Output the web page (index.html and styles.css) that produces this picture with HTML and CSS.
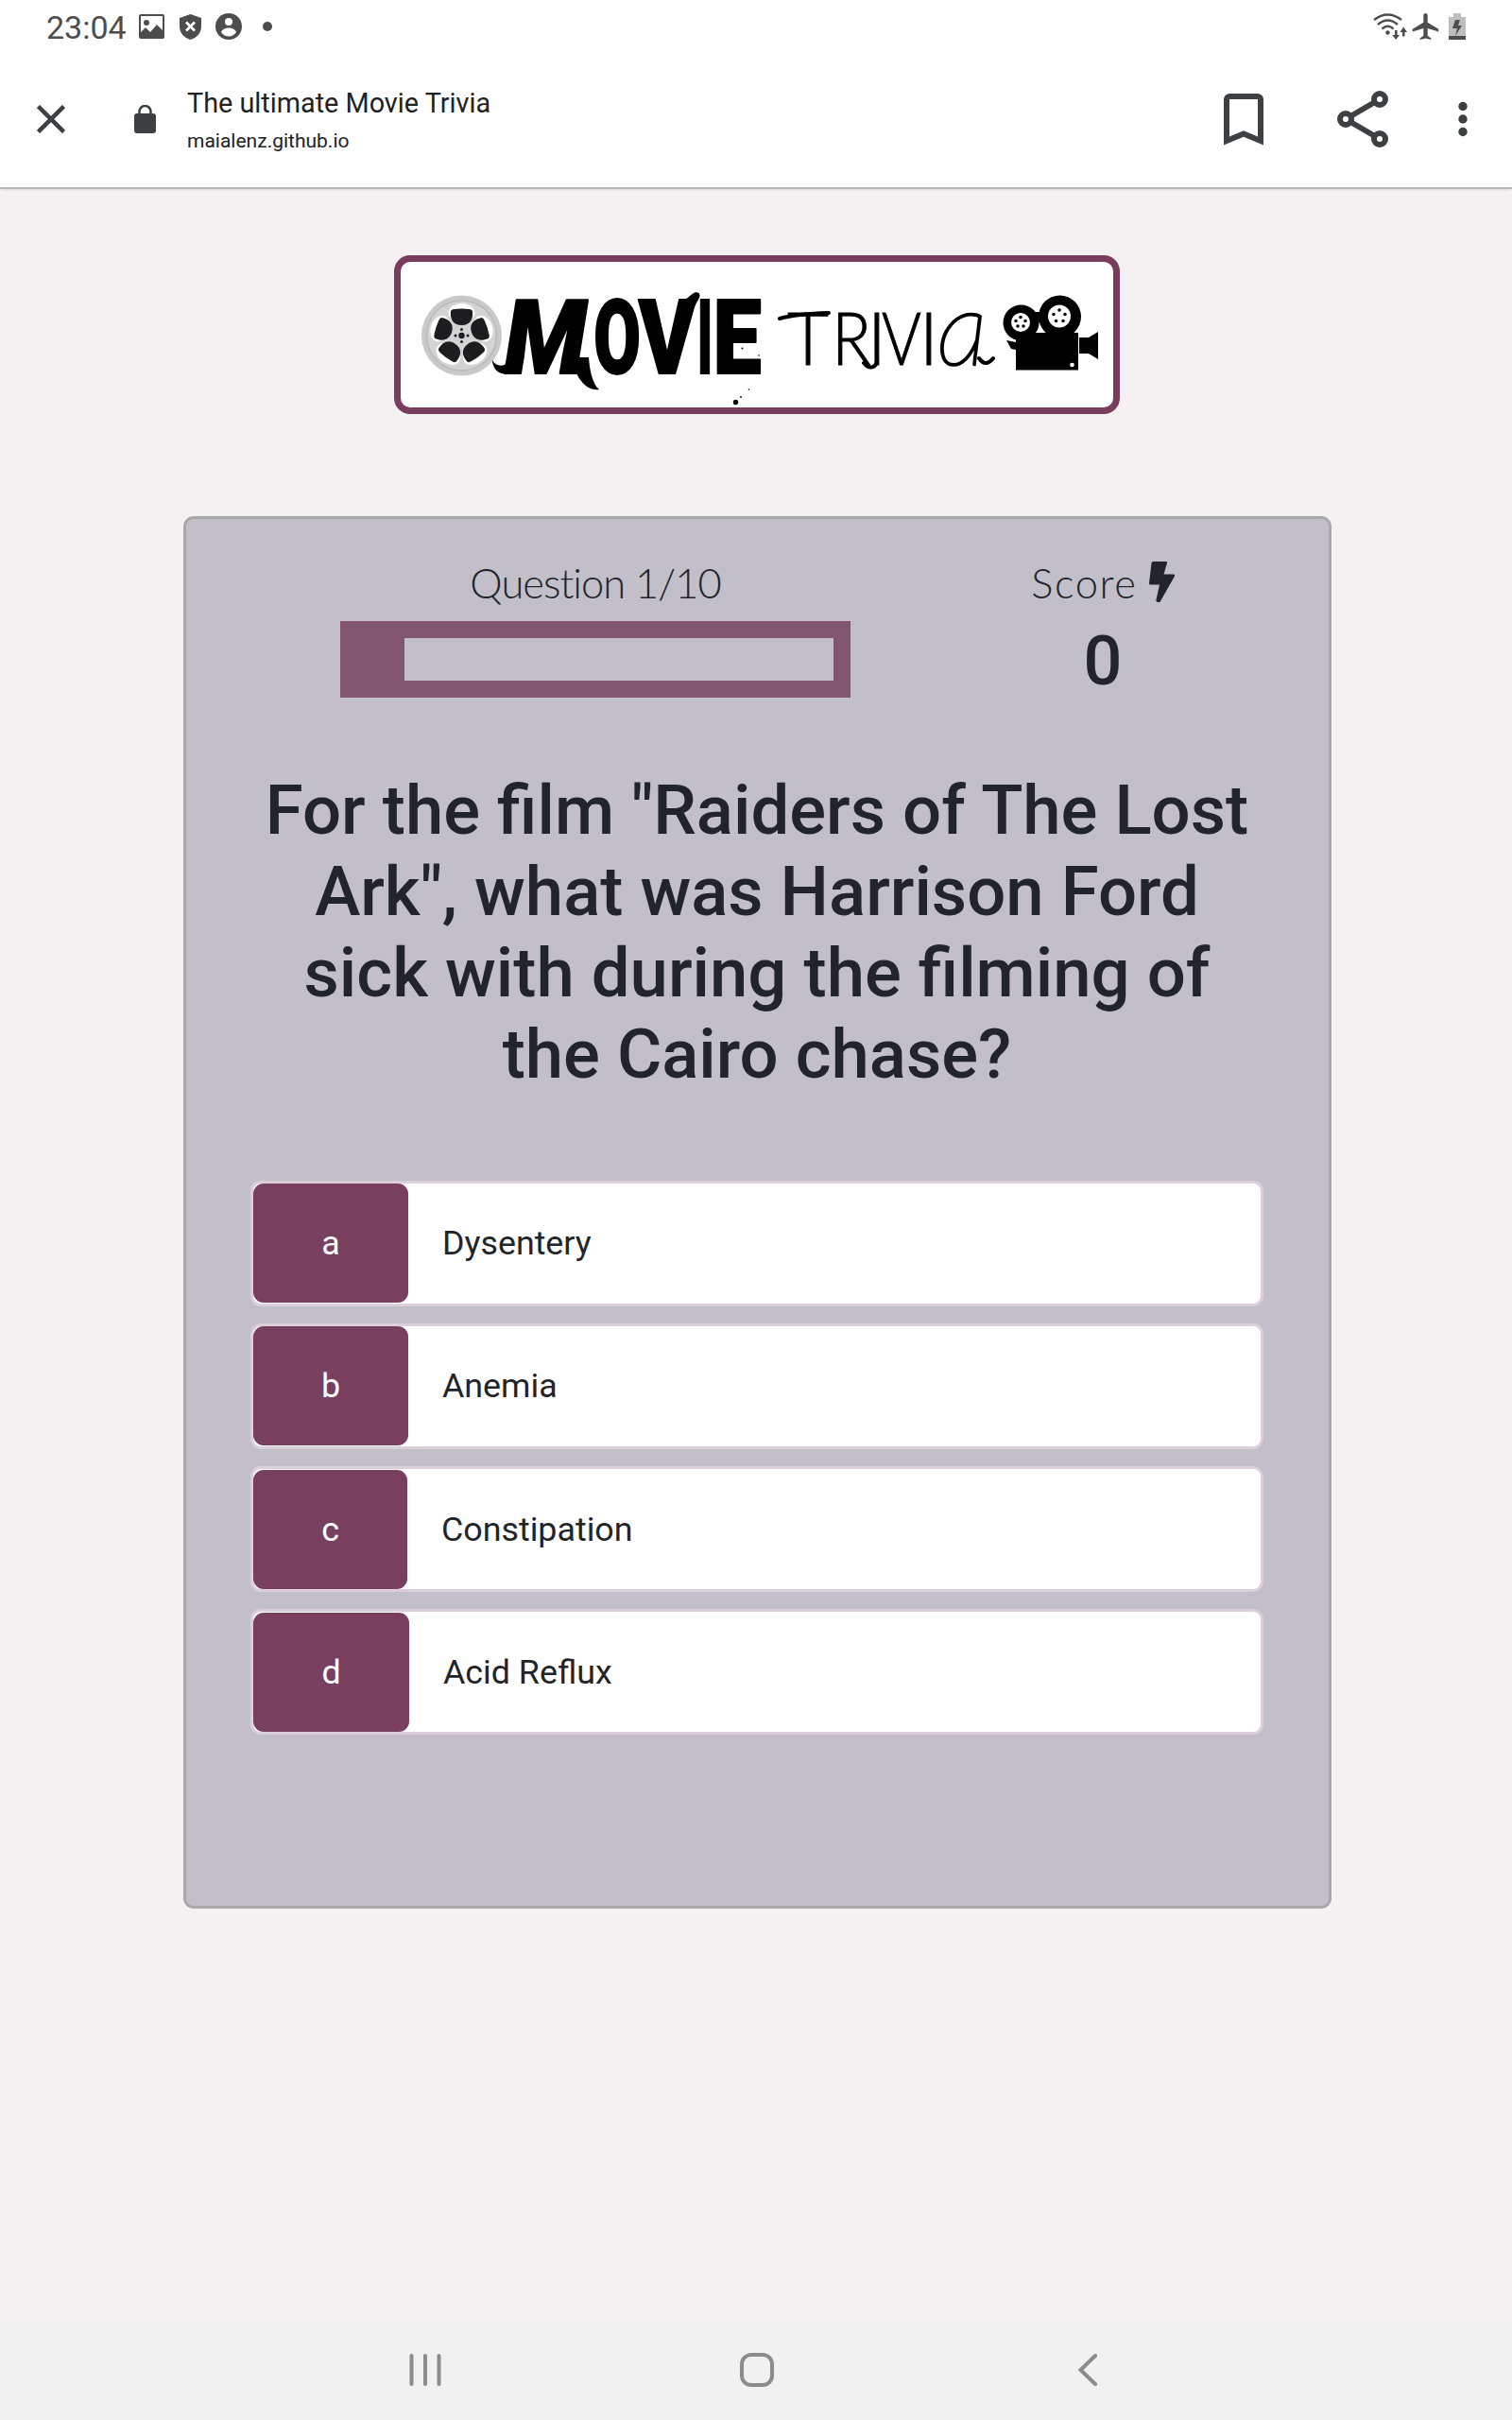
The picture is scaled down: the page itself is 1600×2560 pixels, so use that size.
FILE: index.html
```html
<!DOCTYPE html>
<html lang="en">
<head>
<meta charset="utf-8">
<title>The ultimate Movie Trivia</title>
<link rel="stylesheet" href="styles.css">
</head>
<body>
<div class="status">
  <div class="status-left">
    <span class="clock">23:04</span>
    <svg class="i-image" viewBox="0 0 27 26"><path fill-rule="evenodd" d="M2 0h23a2 2 0 0 1 2 2v22a2 2 0 0 1-2 2H2a2 2 0 0 1-2-2V2a2 2 0 0 1 2-2zM2 2v17l5-5 5 5 7-8 6 6V2zM8 6a3 3 0 1 1 0 6a3 3 0 1 1 0-6z"/></svg>
    <svg class="i-shield" viewBox="0 0 23 27"><path d="M11.500 0L23 4v9c0 7-5 12-11.500 14C5 25 0 20 0 13V4z"/><path class="cut" d="M7 8.500l9 9M16 8.500l-9 9"/></svg>
    <svg class="i-user" viewBox="0 0 28 28"><circle cx="14" cy="14" r="14"/><circle class="hole" cx="14" cy="9" r="4"/><path class="hole" d="M6 20c2-6 14-6 16 0c-4 6-12 6-16 0z"/></svg>
    <svg class="i-dot" viewBox="0 0 10 10"><circle cx="5" cy="5" r="5"/></svg>
  </div>
  <div class="status-right">
    <svg class="i-wifi" viewBox="0 0 36 28"><g class="line"><path d="M1 7Q15.500-4 30 7"/><path d="M5 12Q15.500 3 26 12"/><path d="M9.500 16.500Q15.500 11 21.500 16.500"/></g><circle cx="15.500" cy="20.500" r="2.200"/><path d="M23 18h2.500v5H28l-3.800 5-3.900-5H23zM31 24.500h2.500V20H36l-3.800-5.500L28.500 20H31z"/></svg>
    <svg class="i-plane" viewBox="2 2 20 20" preserveAspectRatio="none"><path d="M21.500 16v-2l-8-5V3.500C13.500 2.700 12.800 2 12 2s-1.500.700-1.500 1.500V9l-8 5v2l8-2.500V19l-2.500 2v1l4-1 4 1v-1l-2.500-2v-5.500z"/></svg>
    <svg class="i-battery" viewBox="0 0 18 28"><path fill="#bebebe" d="M5 0h8v4h5v20H0V4h5z"/><path d="M0 24h18v4H0zM7 7h5l-2 6h4L7 24l2-8H4z"/></svg>
  </div>
</div>
<header class="toolbar">
  <svg class="i-close" viewBox="0 0 30 30"><path d="M1.500 1.500l27 27M28.500 1.500l-27 27"/></svg>
  <svg class="i-lock" viewBox="0 0 23 30"><path d="M3 9h17a3 3 0 0 1 3 3v15a3 3 0 0 1-3 3H3a3 3 0 0 1-3-3V12a3 3 0 0 1 3-3z"/><path class="shackle" d="M5.500 10V7a6 6 0 0 1 12 0v3"/></svg>
  <div class="site"><div class="site-title">The ultimate Movie Trivia</div><div class="site-url">maialenz.github.io</div></div>
  <svg class="i-bookmark" viewBox="0 0 42 55"><path d="M3 50V6a3 3 0 0 1 3-3h30a3 3 0 0 1 3 3v44L21 42.500z"/></svg>
  <svg class="i-share" viewBox="0 0 54 60"><path d="M9 30L45 9M9 30l36 21"/><circle cx="9" cy="30" r="6"/><circle cx="45" cy="9" r="6"/><circle cx="45" cy="51" r="6"/></svg>
  <svg class="i-more" viewBox="0 0 10 38"><circle cx="5" cy="5.500" r="4.700"/><circle cx="5" cy="19" r="4.700"/><circle cx="5" cy="32.500" r="4.700"/></svg>
</header>
<main class="page">
  <div class="logo">
    <svg viewBox="424 277 754 154">
      <g transform="translate(488.500 355)">
        <circle r="42.500" fill="#c9c9c9"/><circle r="37" fill="#d3d3d3" stroke="#b9b9b9" stroke-width="1.500"/>
        <g id="reel-hole"><ellipse cy="-24" rx="14" ry="10" fill="#fff"/><path fill="#1d1d1f" d="M-11.500-26q1-2 4-2q7.500-1 15 0q3 0 4 2c1 9-3 15-11.500 15s-12.500-6-11.500-15z"/></g>
        <use href="#reel-hole" transform="rotate(72)"/><use href="#reel-hole" transform="rotate(144)"/><use href="#reel-hole" transform="rotate(216)"/><use href="#reel-hole" transform="rotate(288)"/>
        <g fill="#1d1d1f"><circle r="3.200"/><circle cx="6.500" r="1.500"/><circle cx="-6.500" r="1.500"/><circle cy="6.500" r="1.500"/><circle cy="-6.500" r="1.500"/></g>
      </g>
      <g class="brush">
        <text class="slant" transform="translate(577 395) scale(.93 1)">M</text>
        <text transform="translate(653 395) scale(.66 1)">O</text>
        <text transform="translate(706 395) scale(.84 1)">V</text>
        <text transform="translate(746 395) scale(.5 1)">I</text>
        <text transform="translate(780 395) scale(.84 1)">E</text>
      </g>
      <path d="M521 381c5 8 11 6 18 3l14 5c-8 8-16 8-22 6c-6-1-10-8-10-14zM603 378h20c1 14 4 28 11 34c-14 2-24-12-31-34zM718 324c6-6 12-12 18-15q6 0 4 6l-6 11z"/>
      <circle cx="778.500" cy="425.500" r="2.700"/><circle cx="784" cy="420" r=".9"/><circle cx="792.500" cy="412" r=".8"/><circle cx="785.500" cy="368.500" r="1"/><circle cx="803" cy="376" r=".8"/>
      <g class="pen">
        <text transform="translate(855 386)">T</text>
        <text transform="translate(901 386) scale(.9 1)">R</text>
        <text transform="translate(928 386)">I</text>
        <text transform="translate(954 386) scale(.84 1)">V</text>
        <text transform="translate(983 386)">I</text>
        <text class="last" transform="translate(1018 386)">a</text>
      </g>
      <path class="ink" d="M825 337q18-5 52-6M914 384q5 6 10 4q3-1 4-6M1036 379q7 10 15 0"/>
      <path d="M1075 352h66v39.500h-66zM1142 357h10l10-6v29l-10-6h-10zM1065 360l10 2v8l-5-1z"/>
      <circle cx="1080.500" cy="341.500" r="19"/><circle cx="1121.500" cy="335" r="22.500"/><path d="M1092 330h16v11h-16z"/>
      <g fill="#fff"><circle cx="1080" cy="341" r="10"/><circle cx="1121" cy="334.500" r="12"/><circle cx="1134.500" cy="386" r="2.300"/><path d="M1096 352l4-5 5 5z"/></g>
      <path class="dots" d="M1080 335.500v0M1085 339.500v0M1083 345v0M1077 345v0M1075 339.500v0M1121 328v0M1127 332.500v0M1125 339.500v0M1117.500 339.500v0M1115 332.500v0"/>
    </svg>
  </div>
  <section class="card">
    <div class="hud">
      <div class="hud-question"><p class="hud-label">Question 1/10</p><div class="progress"><div class="progress-fill" style="width:10%"></div></div></div>
      <div class="hud-score"><p class="hud-label loose">Score<svg class="bolt" viewBox="0 0 27 43"><path d="M4.500 0h13a1.500 1.500 0 0 1 1.400 2L15.500 13.500H26a1.500 1.500 0 0 1 1 2L12 42q-1 1.500-3 1t-1.500-2.500L11 24.500H1.500A1.500 1.500 0 0 1 0 23L2.500 1.500Q3 0 4.500 0z"/></svg></p><div class="score">0</div></div>
    </div>
    <h1 class="question">For the film "Raiders of The Lost Ark", what was Harrison Ford sick with during the filming of the Cairo chase?</h1>
    <div class="choices">
      <div class="choice"><span class="prefix">a</span><span class="answer">Dysentery</span></div>
      <div class="choice"><span class="prefix">b</span><span class="answer">Anemia</span></div>
      <div class="choice low"><span class="prefix narrow">c</span><span class="answer">Constipation</span></div>
      <div class="choice low"><span class="prefix wide">d</span><span class="answer">Acid Reflux</span></div>
    </div>
  </section>
</main>
<nav class="navbar">
  <svg class="i-recent" viewBox="0 0 34 34"><path d="M2.500 2v30M17 2v30M31.500 2v30"/></svg>
  <svg class="i-home" viewBox="0 0 38 38"><rect x="3" y="3" width="32" height="32" rx="10"/></svg>
  <svg class="i-back" viewBox="0 0 22 34"><path d="M19 2L3.500 17 19 32"/></svg>
</nav>
</body>
</html>
```
FILE: styles.css
```css
* { box-sizing: border-box; }
body { margin: 0; width: 1600px; height: 2560px; display: flex; flex-direction: column; background: #f5f1f3; font-family: Roboto, sans-serif; color: #212529; overflow: hidden; }
svg { display: block; flex: none; }
.status { height: 56px; background: #fff; display: flex; justify-content: space-between; align-items: center; padding: 0 49px 0 49px; fill: #4d4d4d; color: #4d4d4d; }
.status-left, .status-right { display: flex; align-items: center; }
.clock { font-size: 34px; line-height: 56px; width: 98px; padding-top: 2px; }
.i-image { width: 27px; height: 26px; margin-right: 16px; }
.i-shield { width: 23px; height: 27px; margin-right: 15px; }
.i-user { width: 28px; height: 28px; margin-right: 22px; }
.i-dot { width: 10px; height: 10px; }
.cut { stroke: #fff; stroke-width: 2.6; }
.hole { fill: #fff; }
.i-wifi { width: 36px; height: 28px; margin-right: 5px; }
.line { fill: none; stroke: #4d4d4d; stroke-width: 2.4; }
.i-plane { width: 29px; height: 28px; margin-right: 10px; }
.i-battery { width: 18px; height: 28px; }
.toolbar { height: 144px; background: #fff; border-bottom: 2px solid #b8b8ba; box-shadow: 0 2px 2px -1px rgba(0,0,0,.1); display: flex; align-items: center; padding: 0 47px 0 39px; margin-bottom: -1px; fill: #3c4043; z-index: 1; }
.toolbar svg { margin-bottom: 2px; }
.i-close { width: 30px; height: 30px; stroke: #3c4043; stroke-width: 4.5; margin-right: 73px; }
.i-lock { width: 23px; height: 30px; margin-right: 33px; }
.shackle { fill: none; stroke: #3c4043; stroke-width: 2.5; }
.site { flex: 1; padding-top: 4px; color: #202124; white-space: nowrap; }
.site-title { font-size: 28.8px; line-height: 40px; }
.site-url { font-size: 21px; line-height: 40px; }
.i-bookmark { width: 42px; height: 55px; fill: none; stroke: #3c4043; stroke-width: 6; margin-right: 78px; }
.i-share { width: 54px; height: 60px; fill: #fff; stroke: #3c4043; stroke-width: 6; margin-right: 74px; }
.i-more { width: 10px; height: 38px; }
.page { flex: 1; display: flex; flex-direction: column; align-items: center; padding-top: 71px; }
.logo { width: 768px; height: 168px; border: 7px solid #783c5c; border-radius: 17px; background: #fff; margin-left: 2px; }
.logo svg { width: 754px; height: 154px; }
.brush { font-family: Roboto, sans-serif; font-weight: 900; font-size: 109px; text-anchor: middle; stroke: #000; stroke-width: 2; stroke-linejoin: round; }
.slant { font-style: italic; }
.pen { font-family: Lato, sans-serif; font-weight: 300; font-size: 76px; text-anchor: middle; stroke: #000; stroke-width: 1; }
.last { font-style: italic; font-size: 108px; font-weight: 100; stroke-width: 2.6; }
.ink { fill: none; stroke: #000; stroke-width: 4; stroke-linecap: round; }
.dots { stroke: #000; stroke-width: 3.6; stroke-linecap: round; }
.card { width: 1215px; height: 1473px; margin: 108px 0 0 3px; background: #c2bfc9; border: 3px solid #a8a8aa; border-radius: 11px; padding: 42px 69px 0 68px; }
.hud { height: 162px; display: flex; padding-left: 95px; }
.hud-question { width: 540px; }
.hud-score { margin-left: 127px; width: 280px; text-align: center; }
.hud-label { margin: 0; height: 66px; padding-bottom: 16px; display: flex; align-items: center; justify-content: center; font-family: Lato, sans-serif; font-weight: 300; font-size: 43.5px; letter-spacing: -1px; }
.loose { letter-spacing: 1.6px; }
.bolt { width: 27px; height: 43px; margin: 0 0 1px 12px; fill: #212529; }
.progress { height: 81px; border: 18px solid #82566f; }
.progress-fill { height: 45px; background: #82566f; }
.score { font-weight: 500; font-size: 72px; line-height: 86px; }
.question { margin: 62px 0 0; height: 434px; padding: 0 10px; font-size: 72.5px; line-height: 86.1px; font-weight: 500; text-align: center; }
.choices { display: flex; flex-direction: column; gap: 18px; }
.choice { height: 133px; border: 3px solid #dccfd9; border-radius: 11px; background: #fff; display: flex; align-items: flex-start; font-size: 35.8px; line-height: 126px; }
.low { padding-top: 1px; }
.prefix { width: 164px; height: 126px; background: #783f5e; border-radius: 11px; color: #fff; text-align: center; }
.narrow { width: 163px; }
.wide { width: 165px; }
.answer { padding-left: 36px; }
.navbar { height: 108px; background: #f1f1f1; display: flex; align-items: center; padding: 2px 438px 0 433px; fill: none; stroke: #8c8c8c; }
.i-recent { width: 34px; height: 34px; stroke-width: 4; stroke-linecap: round; margin-right: 315px; }
.i-home { width: 38px; height: 38px; stroke-width: 4; margin-right: 320px; }
.i-back { width: 22px; height: 34px; stroke-width: 4; stroke-linecap: round; }
```
